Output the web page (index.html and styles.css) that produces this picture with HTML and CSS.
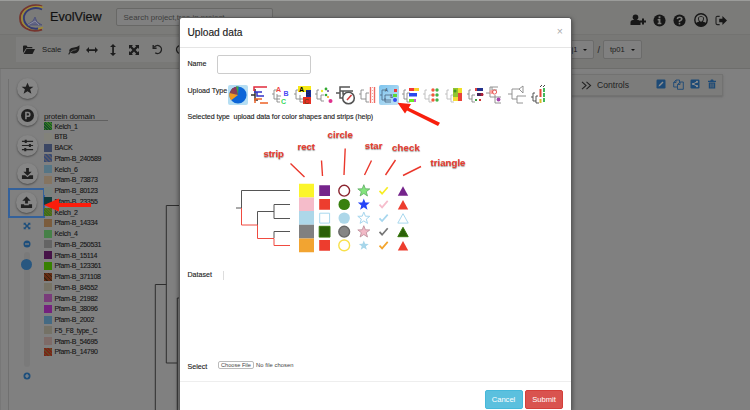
FILE: index.html
```html
<!DOCTYPE html>
<html lang="en">
<head>
<meta charset="utf-8">
<title>EvolView</title>
<link rel="stylesheet" href="styles.css">
</head>
<body>
<div class="app">
  <header class="header">
    <svg class="logo" viewBox="0 0 30 30" fill="none">
      <path d="M24 3.500C16 0 5 4 2.500 12C0 24 12 30.500 24 26.500" stroke="#75352e" stroke-width="2"/>
      <path d="M25 4.500C17 1.500 7 5 4 12.500C2 23 13 29 25 24.500" stroke="#a08b32" stroke-width="1.500"/>
      <path d="M24 6.500C17 3 8 6 6 13C5 21 12 27 20 25.500" stroke="#343b72" stroke-width="1.800"/>
      <path d="M9 22L15 18L17 14L19 19L24 22Z" fill="#626584" stroke="#454a78" stroke-width=".7"/>
      <path d="M10 22L17 18L21 22" stroke="#9999ac" stroke-width=".7"/>
    </svg>
    <span class="brand">EvolView</span>
    <div class="search">Search project,tree in project</div>
    <nav class="account">
      <svg class="i-user" viewBox="0 0 16 12"><circle cx="5.500" cy="3.200" r="2.800"/><path d="M.5 11V8.500Q.5 6 3 6H8Q10.500 6 10.500 8.500V11ZM10 6.500h6v2h-6zM12 4.500h2v6h-2z"/></svg>
      <svg viewBox="0 0 14 14"><circle cx="7" cy="7" r="6.500"/><path class="cut" d="M6 2.500h2v2H6zM5 5.500h3v4h1V11H5V9.500h1V7H5z"/></svg>
      <svg viewBox="0 0 14 14"><circle cx="7" cy="7" r="6.500"/><path d="M4.600 5.400Q5 3.500 7 3.500Q9.500 3.500 9.500 5.400Q9.500 6.700 7 7.500V8.800M7 9.700V11.300" fill="none" stroke="#7b7b79" stroke-width="1.700"/></svg>
      <svg class="i-face" viewBox="0 0 14 14"><circle cx="7" cy="7" r="6.200" fill="none" stroke="#171717" stroke-width="1.400"/><path d="M1.500 10.500Q3 9 5 8.700Q3.800 7 4.200 4.500Q7 1.500 9.800 4.500Q10.200 7 9 8.700Q11 9 12.500 10.500Q7 16 1.500 10.500Z"/><path class="cut" d="M5 4.500Q7 2.800 9 4.500Q9.300 8.300 7 8.700Q4.700 8.300 5 4.500Z"/></svg>
      <svg class="i-out" viewBox="0 0 14 12"><path d="M5 1.500H2.500Q1 1.500 1 3V9Q1 10.500 2.500 10.500H5" fill="none" stroke="#222" stroke-width="1.200"/><path d="M4.500 4H8V1L13 6L8 11V8H4.500Z"/></svg>
    </nav>
  </header>

  <div class="toolbar">
    <div class="tools">
      <svg class="t-folder" viewBox="0 0 12 10"><path d="M0 8V1.500Q0 .5 1 .5H3.500L4.500 2H8.500Q9.500 2 9.500 3.200H3.200Z"/><path d="M3.500 4H12L9.500 9H.7Z"/></svg>
      <span class="scale">Scale</span>
      <svg class="t-leaf" viewBox="0 0 12 10"><path d="M11.500 .3Q12 8 6.500 8.500Q4 8.800 2.500 7.600L1 9.800L.3 9L1.500 7Q0 3 6 2.500Q9.500 2.200 11.500 .3Z"/><path d="M2.500 7Q5 4.800 8.500 4.600" fill="none" stroke="#7b7b79" stroke-width=".7"/></svg>
      <svg class="t-h" viewBox="0 0 12 8"><path d="M0 4L3 1V3.200H9V1L12 4L9 7V4.900H3V7Z"/></svg>
      <svg class="t-v" viewBox="0 0 8 12"><path d="M4 0L7 3H4.900V9H7L4 12L1 9H3.200V3H1Z"/></svg>
      <svg class="t-x" viewBox="0 0 12 12"><path d="M1 1h4L3.800 2.200 6 4.400 8.200 2.200 7 1h4v4L9.800 3.800 7.600 6 9.800 8.200 11 7v4H7L8.200 9.800 6 7.600 3.800 9.800 5 11H1V7L2.200 8.200 4.400 6 2.200 3.800 1 5Z"/></svg>
      <svg class="t-u" viewBox="0 0 12 12"><path d="M2.500 3.500A4.300 4.300 0 1 1 3.500 9.500M1.300 1V4.600H5" fill="none" stroke="#222" stroke-width="1.500"/></svg>
      <svg class="t-u" viewBox="0 0 12 12"><path d="M9.500 3.500A4.300 4.300 0 1 0 8.500 9.500M10.700 1V4.600H7" fill="none" stroke="#222" stroke-width="1.500"/></svg>
    </div>
    <div class="crumbs">
      <div class="drop proj"><span>proj1</span><i></i></div>
      <span class="slash">/</span>
      <div class="drop tree"><span>tp01</span><i></i></div>
    </div>
  </div>

  <main class="work">
    <aside class="rail">
      <div class="round"><svg viewBox="0 0 14 14"><path d="M7 .8L8.900 5H13.400L9.800 7.900L11.200 12.700L7 9.900L2.800 12.700L4.200 7.900L.6 5H5.100Z"/></svg></div>
      <div class="round"><svg viewBox="0 0 14 14"><circle cx="7" cy="7" r="7"/><path d="M5.300 11V3.800H7.500Q9.500 3.800 9.500 5.800Q9.500 7.800 7.500 7.800H5.300" fill="none" stroke="#858585" stroke-width="1.700"/></svg></div>
      <div class="round"><svg viewBox="0 0 14 14"><path d="M1 2.500H13M1 7H13M1 11.500H13" stroke="#222" stroke-width="1.200"/><path d="M4 .8h2.200v3.400H4zM8.500 5.300h2.200v3.400H8.500zM3.500 9.800h2.200v3.400H3.500z"/></svg></div>
      <div class="round"><svg viewBox="0 0 14 14"><path d="M5.500 1H8.500V5H11.500L7 9.500L2.500 5H5.500ZM1 9H4.500L7 11L9.500 9H13V13H1Z"/></svg></div>
      <div class="focus"><div class="round"><svg viewBox="0 0 14 14"><path d="M5.500 8V5H2.500L7 .5L11.500 5H8.500V8ZM1 9H4.500V10H9.500V9H13V13H1Z"/></svg></div></div>
      <svg class="r-fit" viewBox="0 0 12 12"><path d="M1 1h4L3.800 2.200 6 4.400 8.200 2.200 7 1h4v4L9.800 3.800 7.600 6 9.800 8.200 11 7v4H7L8.200 9.800 6 7.600 3.800 9.800 5 11H1V7L2.200 8.200 4.400 6 2.200 3.800 1 5Z"/></svg>
      <svg class="r-minus" viewBox="0 0 8 8"><circle cx="4" cy="4" r="3.500"/><path d="M2 4H6" stroke="#808080" stroke-width="1.300"/></svg>
      <div class="slider"><div class="knob"></div></div>
      <svg class="r-plus" viewBox="0 0 8 8"><circle cx="4" cy="4" r="3.500"/><path d="M2 4H6M4 2V6" stroke="#8a8a8a" stroke-width="1.200"/></svg>
    </aside>
    <section class="legend">
      <div class="legend-title">protein domain</div>
      <ul>
        <li><i class="c1"></i>Kelch_1</li><li><i class="c2"></i>BTB</li><li><i class="c3"></i>BACK</li>
        <li><i class="c4"></i>Pfam-B_240589</li><li><i class="c5"></i>Kelch_6</li><li><i class="c6"></i>Pfam-B_73873</li>
        <li><i class="c7"></i>Pfam-B_80123</li><li><i class="c8"></i>Pfam-B_23355</li><li><i class="c9"></i>Kelch_2</li>
        <li><i class="c10"></i>Pfam-B_14334</li><li><i class="c11"></i>Kelch_4</li><li><i class="c12"></i>Pfam-B_250531</li>
        <li><i class="c13"></i>Pfam-B_15114</li><li><i class="c14"></i>Pfam-B_123361</li><li><i class="c15"></i>Pfam-B_371108</li>
        <li><i class="c16"></i>Pfam-B_84552</li><li><i class="c17"></i>Pfam-B_21982</li><li><i class="c18"></i>Pfam-B_38096</li>
        <li><i class="c19"></i>Pfam-B_2002</li><li><i class="c20"></i>F5_F8_type_C</li><li><i class="c21"></i>Pfam-B_54695</li>
        <li><i class="c22"></i>Pfam-B_14790</li>
      </ul>
    </section>
    <svg class="branches" viewBox="150 69 40 341"><path d="M190 205.500H166.300V363H177M166.300 284.500H155.300V410M190 298H177.300V410" fill="none" stroke="#2e2e2e"/></svg>
    <section class="controls">
      <svg class="c-more" viewBox="0 0 12 10"><path d="M1 1L5.500 5L1 9M6 1L10.500 5L6 9" fill="none" stroke="#222" stroke-width="1.200"/></svg>
      <span>Controls</span>
      <svg class="c-ic" viewBox="0 0 10 10"><rect x=".5" y=".5" width="9" height="9" rx="1.200"/><path d="M2.500 7.500L3 6L6.500 2.500L7.500 3.500L4 7Z" fill="#909090"/></svg>
      <svg class="c-ic copy" viewBox="0 0 11 11"><path d="M4.500 8H.7V3.500L3 1H6.500V3M3 1V3.500H.7M4.500 10.300V5.500L7 3H10.300V10.300ZM7 3V5.500H4.500" fill="none" stroke="#1d4a76" stroke-width=".9"/></svg>
      <svg class="c-ic" viewBox="0 0 10 10"><rect x=".5" y=".5" width="9" height="9" rx="1.200"/><path d="M7 2.800L3 5L7 7.200" fill="none" stroke="#909090"/><circle cx="7" cy="2.800" r="1.100" fill="#909090"/><circle cx="3" cy="5" r="1.100" fill="#909090"/><circle cx="7" cy="7.200" r="1.100" fill="#909090"/></svg>
      <svg class="c-ic bin" viewBox="0 0 10 10"><path d="M1 1.800H3.300L4 .5H6L6.700 1.800H9V3H1ZM1.800 3.500H8.200V9.500H1.800Z"/><path d="M3.700 4.500V8.500M5 4.500V8.500M6.300 4.500V8.500" stroke="#777" stroke-width=".6"/></svg>
    </section>
  </main>
</div>

<svg class="pointer" viewBox="0 0 48 14"><path d="M0 7L15 .5V5H47V9H15V13.500Z" fill="#fb1d0c"/></svg>

<div class="modal" role="dialog">
  <div class="modal-head"><h1>Upload data</h1><span class="close">×</span></div>
  <div class="modal-body">
    <div class="row name"><label>Name</label><input type="text"></div>
    <div class="row types"><label>Upload Type</label>
      <div class="icons">
        <svg class="on" viewBox="0 0 20 20"><circle cx="10" cy="10" r="8.600" fill="#0b65d8"/><path d="M10 10L9 1.500A8.600 8.600 0 0 0 4 3.800Z" fill="#8b3562"/><path d="M10 10L8 1.500L10.500 1.500Z" fill="#41a642"/><path d="M10 10L4.800 3A8.600 8.600 0 0 0 1.500 8.500Z" fill="#8a4450"/><path d="M10 10L1.500 8A8.600 8.600 0 0 0 3.200 15.300Z" fill="#f09a20"/></svg>
        <svg viewBox="0 0 20 20"><g fill="none" stroke-width="1.500"><path d="M1 10H5M5 4V15H8" stroke="#333"/><path d="M4 6V2H17" stroke="#e12a3b"/><path d="M4 7H12M7 7V11H14" stroke="#3434c8"/><path d="M5 18V14H12M10 18H18" stroke="#ed6226"/></g></svg>
        <svg viewBox="0 0 20 20"><path class="tr" d="M1 9H3M6 5H3V14H9M6 9V17H9M6 11H10"/><text class="bold" x="5" y="6.500" fill="#f24444">A</text><text class="bold" x="12.500" y="10.800" fill="#4949f3">B</text><text class="bold" x="10" y="18.500" fill="#36d85b">C</text></svg>
        <svg viewBox="0 0 20 20"><path class="tr" d="M1 9H3M6 5H3V14H10M7 10V17H11"/><path d="M5 1H18V7H5Z" fill="#f7e817"/><path d="M13 5H18V12H13Z" fill="#162e96"/><path d="M10 12H18V19H10Z" fill="#e72f24"/><text class="bold" x="6" y="6.500">A</text><text x="13" y="11" fill="#1e1e5b">B</text><text x="11" y="18.500" fill="#541">C</text></svg>
        <svg viewBox="0 0 20 20"><path class="tr" d="M1 9H3M5 5H3V14H7M7 10V16H10M7 10H10"/><circle cx="8" cy="6" r="1.200" fill="#ee2"/><circle cx="12" cy="4" r="1.400" fill="#3a3"/><circle cx="12" cy="10" r="1.300" fill="#3a3"/><circle cx="14" cy="6" r=".9" fill="#538"/><circle cx="14" cy="12" r=".9" fill="#e90"/><circle cx="16.500" cy="16" r="2" fill="#df308d"/></svg>
        <svg viewBox="0 0 20 20"><path class="dk" d="M0 8H4M14 2H4V13H8M4 6H17M7 6V9H12"/><circle cx="12.500" cy="13" r="5.800" fill="#fff" stroke="#555" stroke-width="1.600"/><path d="M11 15L15.500 10" stroke="#d43a3a" stroke-width="1.500"/></svg>
        <svg viewBox="0 0 20 20"><path class="tr" d="M1 9H3M6 5H3V14H8M11 8H8V17H11"/><path d="M12.500 2V18M16.500 2V18" stroke="#ef6a64" stroke-width="1.400"/><path d="M14.500 2V18" stroke="#f8a7a0" stroke-dasharray="1 2"/></svg>
        <svg class="on alt" viewBox="0 0 20 20"><path class="tr bl" d="M1 10H3M8 5H3V15H12M6 15V10H12M6 13V17H12"/><text class="tiny" x="6" y="7">A</text><text class="tiny" x="11" y="12.500">&amp;</text><path d="M15 4h3v3h-3z" fill="#ef3939"/><path d="M14 9h4v3h-4z" fill="#5cd93c"/><circle cx="16" cy="15" r="2" fill="#314df1"/></svg>
        <svg viewBox="0 0 20 20"><path class="tr" d="M1 9H3M5 5H3V14H6M9 8H6V17H9"/><path d="M8 3h5v3H8z" fill="#f43636"/><path d="M13 3h5v3h-5z" fill="#f7d12d"/><path d="M8 8h8v3.500H8z" fill="#2948ed"/><path d="M8 14h5v3H8z" fill="#69ee25"/><path d="M13 14h2v3h-2z" fill="#c75ad3"/></svg>
        <svg viewBox="0 0 20 20"><path class="tr pale" d="M1 9H3M5 5H3V14H7M10 10H7V17H10"/><g fill="#f3573b"><circle cx="11" cy="5" r="1.700"/><circle cx="11" cy="10" r="1.700"/><circle cx="11" cy="15" r="1.700"/></g><g fill="#45b246"><circle cx="15" cy="5" r="1.700"/><circle cx="15" cy="10" r="1.700"/><circle cx="15" cy="15" r="1.700"/></g></svg>
        <svg viewBox="0 0 20 20"><path class="tr pale" d="M1 9H3M5 5H3V14H7M10 10H7V17H10"/><path d="M9 3h5v9H9z" fill="#91c52f"/><path d="M14 3h4v5h-4z" fill="#f0df28"/><path d="M14 8h4v8h-4z" fill="#e9433b"/><path d="M9 12h5v4H9z" fill="#f3dd35"/><circle cx="11" cy="6" r="1.500" fill="#429424"/></svg>
        <svg viewBox="0 0 20 20"><path class="tr" d="M1 9H3M5 5H3V14H6M9 10H6V17H9"/><path d="M9 3h2v3H9z" fill="#d44"/><path d="M11 3h6v3h-6z" fill="#22318c"/><path d="M11 8h6v3h-6z" fill="#422455"/><circle cx="16" cy="9.500" r="1.500" fill="#b32038"/><path d="M9 14h2v2H9z" fill="#399e3f"/><path d="M13 14h2v2h-2z" fill="#c33"/></svg>
        <svg class="wide" viewBox="0 0 20 20"><path class="tr" d="M0 8H4M12 2H4V12H9M6 2V5H11M9 10V18H15M9 12H15"/><circle cx="5.500" cy="7" r="2.100" fill="#f8a09c"/><circle cx="8.500" cy="7" r="2.100" fill="none" stroke="#ea5c59"/><circle cx="12.500" cy="14.500" r="1.900" fill="#a542ad"/></svg>
        <svg class="wide" viewBox="0 0 20 20"><path class="tr" d="M0 9H4M4 4V14H9M4 4H11L15 1V8L11 4M9 11V18H15M9 11H18"/></svg>
        <svg viewBox="0 0 20 20"><path class="tr dk2" d="M1 12H3M5 8H3V16H6M8 11H6V18H9"/><path d="M10.500 4V12" stroke="#e2483a" stroke-width="2"/><path d="M10.500 14V18" stroke="#d8bd30" stroke-width="2"/><path d="M14 3V17" stroke="#42b85b" stroke-width="2" stroke-dasharray="4 1"/><path d="M10 2L12 0M13 2L15 0" stroke="#444"/></svg>
      </div>
    </div>
    <p class="hint">Selected type&nbsp; upload data for color shapes and strips (help)</p>
    <svg class="diagram" viewBox="230 125 240 130">
      <g fill="none" stroke="#555"><path d="M236 208H241.500V190.500H290M257.500 225V211.500H274M290 204.500H274V218.500H290M274 238V231.500H290"/><path d="M241.500 208V225H257.500V238.500H274V245.500H290" stroke="#f04b40"/></g>
      <g class="labels"><text x="263.500" y="157" textLength="20.500">strip</text><text x="297.500" y="149.500" textLength="17.500">rect</text><text x="327.500" y="138" textLength="25.500">circle</text><text x="364.800" y="148.500" textLength="17.700">star</text><text x="392" y="151" textLength="28">check</text><text x="430.500" y="166" textLength="35">triangle</text></g>
      <path d="M290.500 163.500L304.500 177M321.500 160.500L322.500 176M345.200 148.500L344 175M371.500 160.500L364.500 175M395.500 160L385.500 175M421 166.500L403 175.500" stroke="#ea382c" stroke-width="1.400" fill="none"/>
      <path d="M299 183.700h15v13.700h-15z" fill="#fbf52b"/><path d="M299 197.400h15v13.700h-15z" fill="#f5bcca"/><path d="M299 211.100h15v13.700h-15z" fill="#add7e9"/><path d="M299 224.800h15v13.700h-15z" fill="#808080"/><path d="M299 238.500h15v13.700h-15z" fill="#f2a431"/>
      <path d="M319.200 185.200h10.800v10.800h-10.800z" fill="#75248b"/><path d="M319.200 199h10.800v10.800h-10.800z" fill="#ed3d2e"/><path d="M319.700 213.200h9.900v9.900h-9.900z" fill="#fff" stroke="#a9d8ee"/><path d="M319.200 226.300h10.800v10.800h-10.800z" fill="#2b6008" stroke="#38780e"/><path d="M319.200 240h10.800v10.800h-10.800z" fill="#ed3d2e"/>
      <g stroke-width="1.400"><circle cx="344.200" cy="190.700" r="5.400" fill="#fff" stroke="#8b2530"/><circle cx="344.200" cy="204.400" r="5.700" fill="#38800e"/><circle cx="344.200" cy="218.100" r="5.700" fill="#add7e9"/><circle cx="344.200" cy="231.700" r="5.400" fill="#858585" stroke="#686868"/><circle cx="344.200" cy="245.400" r="5.400" fill="#fff" stroke="#f8e04b"/></g>
      <defs><path id="star" d="M0-6L1.600-1.900L6-1.800L2.500 1L3.700 5.300L0 2.800L-3.700 5.300L-2.500 1L-6-1.800L-1.600-1.900Z"/><path id="check" d="M-4 .2L-1.400 3L4.200-3.500"/><path id="tri" d="M0-4.700L5.200 4.700H-5.200Z"/></defs>
      <use href="#star" x="363.800" y="190.700" fill="#83e57d" stroke="#60a965" stroke-width=".8"/><use href="#star" x="363.800" y="204.400" fill="#2544f7"/><use href="#star" x="363.800" y="218.100" fill="#fff" stroke="#a6d6ee"/><use href="#star" x="363.800" y="231.700" fill="#f2b9c6" stroke="#b98b98" stroke-width=".8"/><use href="#star" transform="translate(363.800 245.400) scale(.83)" fill="#a7d6ea"/>
      <g fill="none" stroke-width="1.700"><use href="#check" x="383.500" y="190.700" stroke="#f7ed25"/><use href="#check" x="383.500" y="204.400" stroke="#f6bdcc"/><use href="#check" x="383.500" y="218.100" stroke="#a8d7ee"/><use href="#check" x="383.500" y="231.700" stroke="#777"/><use href="#check" x="383.500" y="245.400" stroke="#f3a52d"/></g>
      <use href="#tri" x="403" y="191" fill="#75248b"/><use href="#tri" x="403" y="204.700" fill="#ed3d2e"/><use href="#tri" x="403" y="218.400" fill="#fff" stroke="#a9d8ee"/><use href="#tri" x="403" y="232" fill="#2b6008" stroke="#38780e"/><use href="#tri" x="403" y="245.700" fill="#ed3d2e"/>
    </svg>
    <div class="row dataset"><label>Dataset</label><div class="field"></div></div>
    <div class="row select"><label>Select</label><button class="file">Choose File</button><span class="none">No file chosen</span></div>
  </div>
  <div class="modal-foot"><button class="btn cancel">Cancel</button><button class="btn submit">Submit</button></div>
  <svg class="callout" viewBox="397 102 44 24"><path d="M397.500 102.800L411 104L408.800 107.700L440 122.700L438 126L407 110.500L405 113.500Z" fill="#f81f0d"/></svg>
</div>
</body>
</html>
```
FILE: styles.css
```css
* { box-sizing: border-box; }
body { margin: 0; font-family: "Liberation Sans", Arial, sans-serif; color: #1c1c1c; background: #808080; }
svg { display: block; flex: none; }
.app { width: 750px; height: 410px; overflow: hidden; display: flex; flex-direction: column; }

.header { height: 35px; display: flex; align-items: center; padding-left: 18px; background: #7b7b79; border-top: 1px solid #9b9c9a; border-bottom: 1px solid #737371; }
.logo { width: 30px; height: 30px; }
.brand { margin: -2px 0 0 2px; font-size: 12.6px; color: #111; -webkit-text-stroke: .2px #111; }
.search { margin: -2px 0 0 14px; width: 157px; height: 18px; padding-left: 7px; line-height: 18px; font-size: 7.9px; color: #3d3d3d; background: #808080; border: 1px solid #686866; border-radius: 2px; white-space: nowrap; }
.account { margin: 5px 22px 0 auto; display: flex; align-items: center; gap: 7px; }
.account svg { width: 13px; height: 13px; fill: #171717; }
.account .i-user { width: 16px; height: 12px; }
.account .i-face { width: 14px; height: 14px; margin-left: 1px; }
.account .i-out { width: 13px; height: 11px; }
.account .cut { fill: #7b7b79; }

.toolbar { height: 34px; display: flex; align-items: center; justify-content: space-between; padding: 0 108px 4px 16px; background: #787876; border-bottom: 1px solid #6d6d6b; }
.tools { width: 300px; height: 25px; padding-left: 7px; display: flex; align-items: center; background: #7e7e7d; fill: #1d1d1d; }
.scale { width: 26px; margin-left: 7px; font-size: 7.7px; }
.t-folder { width: 12px; height: 10px; }
.t-leaf { width: 12px; height: 10px; }
.t-h { width: 12px; height: 8px; margin-left: 6px; }
.t-v { width: 8px; height: 12px; margin-left: 11px; }
.t-x { width: 12px; height: 12px; margin-left: 11px; }
.t-u { width: 11px; height: 11px; margin-left: 12px; }
.crumbs { display: flex; align-items: center; gap: 3px; }
.drop { height: 19px; display: flex; align-items: center; justify-content: space-between; padding: 0 6px; font-size: 7.6px; background: #808080; border: 1px solid #6b6b6a; border-radius: 2px; }
.drop i { border: 2px solid transparent; border-top: 2.5px solid #111; border-bottom: 0; }
.proj { width: 41px; }
.tree { width: 39px; }
.slash { font-size: 9px; }

.work { flex: 1; display: flex; align-items: flex-start; background: #808080; box-shadow: inset 1px 0 #777; }
.rail { width: 36px; height: 331px; margin: 10px 0 0 8px; display: flex; flex-direction: column; align-items: center; border-left: 1px solid #707070; background: #808080; }
.round { width: 21px; height: 21px; margin-bottom: 7.6px; display: flex; align-items: center; justify-content: center; flex: none; border-radius: 50%; background: #868686; box-shadow: 0 1px 2px #4b4b4b; margin-left: 2px; }
.rail > .round:first-child { margin-top: -1.500px; margin-bottom: 6.600px; }
.rail > .round:nth-child(2) { margin-bottom: 8.600px; }
.round svg { width: 13px; height: 13px; fill: #202020; }
.focus { width: 37px; height: 30px; margin: -4px 0 0 0; flex: none; display: flex; align-items: center; justify-content: center; border: 2px solid #34619a; }
.focus .round { margin: 0; }
.rail > svg { fill: #1d4e7b; }
.r-fit { width: 8px; height: 8px; margin-top: 4px; }
.r-minus { width: 8px; height: 8px; margin-top: 10.500px; }
.slider { width: 6px; height: 115px; flex: none; margin-top: 4px; border-radius: 3px; background: #7a7a7a; display: flex; justify-content: center; padding-top: 7px; }
.knob { width: 11px; height: 11px; flex: none; border-radius: 50%; background: #285780; }
.r-plus { width: 8px; height: 8px; margin-top: 4.500px; }

.legend { width: 106px; margin-top: 42px; font-size: 7px; color: #151515; }
.legend-title { width: 64px; height: 9.800px; line-height: 11px; font-size: 8px; white-space: nowrap; border-bottom: 1px solid #606060; letter-spacing: -.15px; }
.legend ul { list-style: none; margin: 0; padding: 0; }
.legend li { height: 10.750px; display: flex; align-items: center; gap: 2.500px; letter-spacing: -.3px; -webkit-text-stroke: .1px #151515; white-space: nowrap; }
.legend i { width: 8px; height: 8px; flex: none; }
.c1 { background: repeating-linear-gradient(45deg, #174a2c 0 1px, #357c21 1px 2px); }
.c2 { background: #82827a; }
.c3 { background: #3b4664; }
.c4 { background: repeating-linear-gradient(45deg, #374b74 0 1.500px, #575767 1.500px 3px); }
.c5 { background: #557585; }
.c6 { background: #857460; }
.c7 { background: #7a827f; }
.c8 { background: #123a3b; }
.c9 { background: repeating-linear-gradient(45deg, #3c7018 0 1px, #5a6b1e 1px 2px); }
.c10 { background: #7b5c3d; }
.c11 { background: #468047; }
.c12 { background: #646464; }
.c13 { background: #461347; }
.c14 { background: #378000; }
.c15 { background: repeating-linear-gradient(45deg, #642b13 0 2px, #38220e 2px 3px); }
.c16 { background: #777366; }
.c17 { background: #793c7a; }
.c18 { background: #74217e; }
.c19 { background: #446a83; }
.c20 { background: #757266; }
.c21 { background: #7e6b68; }
.c22 { background: repeating-linear-gradient(45deg, #7c2316 0 1.500px, #654522 1.500px 2.500px); }
.branches { width: 40px; height: 341px; }
.controls { width: 163px; height: 22px; margin: 5px 27px 0 auto; padding-left: 20px; display: flex; align-items: center; background: #7c7c7b; border: 1px solid #727271; box-shadow: 0 1px 2px #696969; font-size: 8.600px; color: #222; fill: #1d4a76; }
.c-more { width: 11px; height: 9px; }
.controls span { width: 59px; margin-left: 5px; }
.c-ic { width: 10px; height: 10px; margin-bottom: 2px; }
.controls .copy { width: 11px; height: 11px; }
.controls .c-ic + .c-ic { margin-left: 6.500px; }

.pointer { position: absolute; left: 44px; top: 198px; width: 48px; height: 14px; }

.modal { position: absolute; left: 179px; top: 17px; width: 393px; height: 393px; overflow: hidden; display: flex; flex-direction: column; color: #333; background: #fff; border: 1px solid #5d5d5d; border-bottom: 0; border-radius: 3px 3px 0 0; box-shadow: 0 2px 5px rgba(0,0,0,.5); }
.modal-head { height: 30px; flex: none; display: flex; align-items: center; justify-content: space-between; padding: 0 8px 0 7.500px; border-bottom: 1px solid #e5e5e5; }
h1 { margin: 0; font-size: 10.200px; font-weight: 400; color: #222; -webkit-text-stroke: .15px #222; }
.close { font-size: 10.500px; color: #aaa; margin-top: -3px; }
.modal-body { height: 334px; flex: none; padding-left: 7.500px; border-bottom: 1px solid #eee; font-size: 7.100px; }
.row { display: flex; align-items: center; }
label { white-space: nowrap; color: #222; -webkit-text-stroke: .12px #222; }
.name { height: 33px; }
.name label { width: 29.500px; margin-top: -2px; }
.name input { width: 94px; height: 19px; border: 1px solid #ccc; border-radius: 2px; margin-top: 0; }
.types { height: 24px; margin-top: 2px; }
.types label { width: 40.500px; margin-top: -9px; flex: none; }
.icons { display: flex; gap: 1.600px; }
.icons svg { width: 20px; height: 20px; font-family: "Liberation Sans", Arial, sans-serif; font-size: 7px; }
.icons .wide { transform: translateX(-1px); }
.icons .on { background: #b5def3; border-radius: 2px; }
.icons .alt { background: linear-gradient(135deg, #7cc4ee, #c3e2f4); }
.icons .bold { font-weight: bold; }
.icons .tiny { font-size: 4.500px; fill: #345; }
.tr { fill: none; stroke: #888; stroke-width: .9; }
.pale { stroke: #bbb; }
.bl { stroke: #52718a; }
.dk2 { stroke: #444; }
.dk { fill: none; stroke: #555; stroke-width: 1.500; }
.hint { margin: 4px 0 0; height: 13px; line-height: 13px; color: #222; font-size: 7.100px; letter-spacing: -.06px; -webkit-text-stroke: .12px #222; white-space: nowrap; }
.diagram { width: 240px; height: 130px; margin: 1px 0 0 42.500px; }
.labels { font: bold 9.800px "Liberation Sans", Arial, sans-serif; fill: #e83b2e; text-shadow: 0 1px 1px #999; }
.dataset { height: 14px; margin-top: 13px; }
.dataset .field { width: 1px; height: 9px; margin-left: 11px; background: #ddd; }
.select { height: 16px; margin-top: 75px; }
.select label { width: 30.500px; padding-top: 3px; }
.file { width: 36px; height: 8.500px; padding: 0; font: 5.600px/6px "Liberation Sans", Arial, sans-serif; color: #444; background: #fff; border: 1px solid #bbb; border-radius: 2px; }
.none { margin-left: 2px; font-size: 5.800px; color: #444; letter-spacing: .05px; }
.modal-foot { display: flex; justify-content: flex-end; gap: 2.500px; padding: 8px 8px 0; }
.btn { width: 38px; height: 19px; padding: 0; font: 7.600px "Liberation Sans", Arial, sans-serif; color: #fff; border-radius: 2px; }
.cancel { background: #5bc0de; border: 1px solid #46b8da; }
.submit { background: #d9534f; border: 1px solid #d43f3a; }
.callout { position: absolute; left: 217px; top: 84px; width: 44px; height: 24px; }
```
